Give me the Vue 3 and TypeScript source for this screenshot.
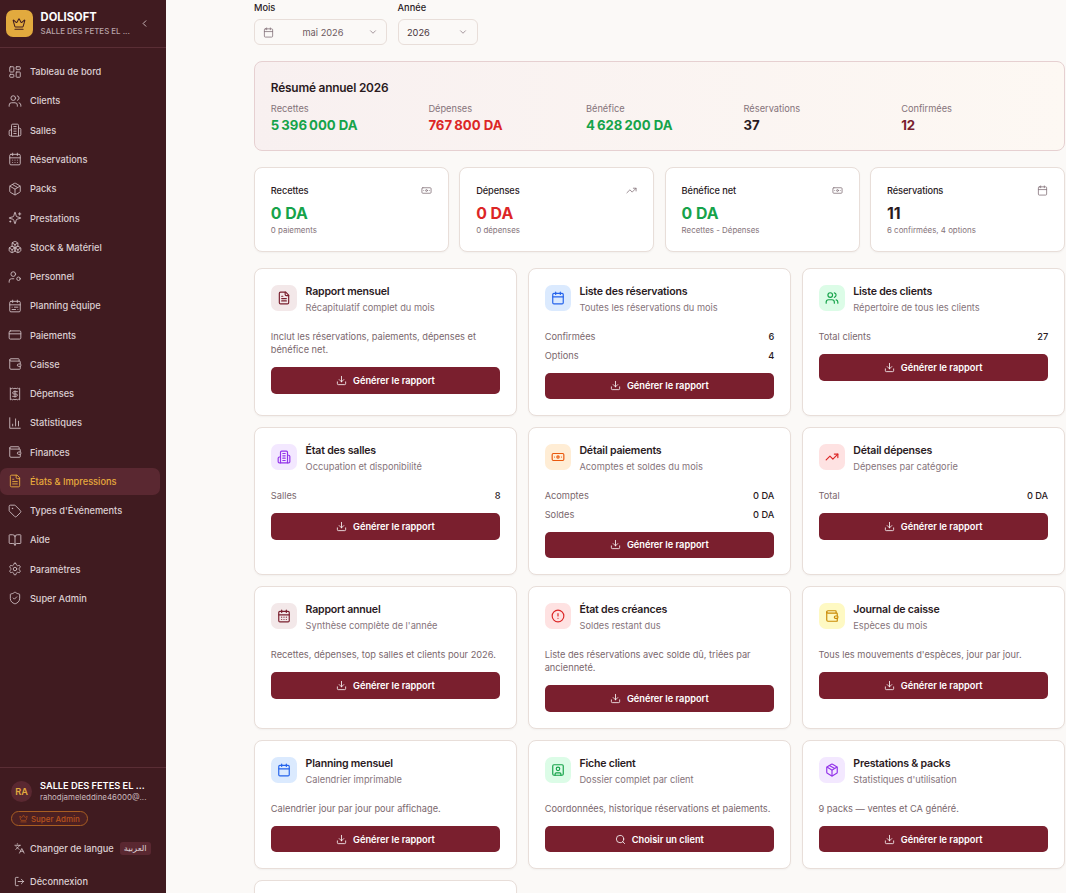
<script setup lang="ts">
// icônes au trait, 24x24
const icons: Record<string, string> = {
  dashboard: '<rect width="7" height="9" x="3" y="3" rx="1"/><rect width="7" height="5" x="14" y="3" rx="1"/><rect width="7" height="9" x="14" y="12" rx="1"/><rect width="7" height="5" x="3" y="16" rx="1"/>',
  users: '<path d="M16 21v-2a4 4 0 0 0-4-4H6a4 4 0 0 0-4 4v2"/><circle cx="9" cy="7" r="4"/><path d="M22 21v-2a4 4 0 0 0-3-3.87"/><path d="M16 3.13a4 4 0 0 1 0 7.75"/>',
  building: '<path d="M6 22V4a2 2 0 0 1 2-2h8a2 2 0 0 1 2 2v18Z"/><path d="M6 12H4a2 2 0 0 0-2 2v6a2 2 0 0 0 2 2h2"/><path d="M18 9h2a2 2 0 0 1 2 2v9a2 2 0 0 1-2 2h-2"/><path d="M10 6h4"/><path d="M10 10h4"/><path d="M10 14h4"/><path d="M10 18h4"/>',
  calendarDays: '<path d="M8 2v4"/><path d="M16 2v4"/><rect width="18" height="18" x="3" y="4" rx="2"/><path d="M3 10h18"/><path d="M8 14h.01"/><path d="M12 14h.01"/><path d="M16 14h.01"/><path d="M8 18h.01"/><path d="M12 18h.01"/><path d="M16 18h.01"/>',
  calendarRange: '<rect width="18" height="18" x="3" y="4" rx="2"/><path d="M16 2v4"/><path d="M3 10h18"/><path d="M8 2v4"/><path d="M17 14h-6"/><path d="M13 18H7"/><path d="M7 14h.01"/><path d="M17 18h.01"/>',
  calendar: '<path d="M8 2v4"/><path d="M16 2v4"/><rect width="18" height="18" x="3" y="4" rx="2"/><path d="M3 10h18"/>',
  package: '<path d="M11 21.73a2 2 0 0 0 2 0l7-4A2 2 0 0 0 21 16V8a2 2 0 0 0-1-1.73l-7-4a2 2 0 0 0-2 0l-7 4A2 2 0 0 0 3 8v8a2 2 0 0 0 1 1.73z"/><path d="M12 22V12"/><path d="m3.3 7 7.703 4.734a2 2 0 0 0 1.994 0L20.7 7"/><path d="m7.5 4.27 9 5.15"/>',
  sparkles: '<path d="M9.937 15.5A2 2 0 0 0 8.5 14.063l-6.135-1.582a.5.5 0 0 1 0-.962L8.5 9.936A2 2 0 0 0 9.937 8.5l1.582-6.135a.5.5 0 0 1 .963 0L14.063 8.5A2 2 0 0 0 15.5 9.937l6.135 1.581a.5.5 0 0 1 0 .964L15.5 14.063a2 2 0 0 0-1.437 1.437l-1.582 6.135a.5.5 0 0 1-.963 0z"/><path d="M20 3v4"/><path d="M22 5h-4"/><path d="M4 17v2"/><path d="M5 18H3"/>',
  boxes: '<path d="M2.97 12.92A2 2 0 0 0 2 14.63v3.24a2 2 0 0 0 .97 1.71l3 1.8a2 2 0 0 0 2.06 0L12 19v-5.5l-5-3-4.03 2.42Z"/><path d="m7 16.5-4.74-2.85"/><path d="m7 16.5 5-3"/><path d="M7 16.5v5.17"/><path d="M12 13.5V19l3.97 2.38a2 2 0 0 0 2.06 0l3-1.8a2 2 0 0 0 .97-1.71v-3.24a2 2 0 0 0-.97-1.71L17 10.5l-5 3Z"/><path d="m17 16.5-5-3"/><path d="m17 16.5 4.74-2.85"/><path d="M17 16.5v5.17"/><path d="M7.97 4.42A2 2 0 0 0 7 6.13v4.37l5 3 5-3V6.13a2 2 0 0 0-.97-1.71l-3-1.8a2 2 0 0 0-2.06 0l-3 1.8Z"/><path d="M12 8 7.26 5.15"/><path d="m12 8 4.74-2.85"/><path d="M12 13.5V8"/>',
  userCog: '<circle cx="18" cy="15" r="3"/><circle cx="9" cy="7" r="4"/><path d="M10 15H6a4 4 0 0 0-4 4v2"/>',
  card: '<rect width="20" height="14" x="2" y="5" rx="2"/><line x1="2" x2="22" y1="10" y2="10"/>',
  wallet: '<path d="M19 7V4a1 1 0 0 0-1-1H5a2 2 0 0 0 0 4h15a1 1 0 0 1 1 1v4h-3a2 2 0 0 0 0 4h3a1 1 0 0 0 1-1v-2a1 1 0 0 0-1-1"/><path d="M3 5v14a2 2 0 0 0 2 2h15a1 1 0 0 0 1-1v-4"/>',
  receipt: '<path d="M4 2v20l2-1 2 1 2-1 2 1 2-1 2 1 2-1 2 1V2l-2 1-2-1-2 1-2-1-2 1-2-1-2 1Z"/><path d="M16 8h-6a2 2 0 1 0 0 4h4a2 2 0 1 1 0 4H8"/><path d="M12 17.5v-11"/>',
  chart: '<path d="M3 3v18h18"/><path d="M18 17V9"/><path d="M13 17V5"/><path d="M8 17v-3"/>',
  file: '<path d="M15 2H6a2 2 0 0 0-2 2v16a2 2 0 0 0 2 2h12a2 2 0 0 0 2-2V7Z"/><path d="M14 2v4a2 2 0 0 0 2 2h4"/><path d="M10 9H8"/><path d="M16 13H8"/><path d="M16 17H8"/>',
  tag: '<path d="M12.586 2.586A2 2 0 0 0 11.172 2H4a2 2 0 0 0-2 2v7.172a2 2 0 0 0 .586 1.414l8.704 8.704a2.426 2.426 0 0 0 3.42 0l6.58-6.58a2.426 2.426 0 0 0 0-3.42z"/><circle cx="7.5" cy="7.5" r=".5" fill="currentColor"/>',
  book: '<path d="M12 7v14"/><path d="M3 18a1 1 0 0 1-1-1V4a1 1 0 0 1 1-1h5a4 4 0 0 1 4 4 4 4 0 0 1 4-4h5a1 1 0 0 1 1 1v13a1 1 0 0 1-1 1h-6a3 3 0 0 0-3 3 3 3 0 0 0-3-3z"/>',
  settings: '<path d="M12.22 2h-.44a2 2 0 0 0-2 2v.18a2 2 0 0 1-1 1.73l-.43.25a2 2 0 0 1-2 0l-.15-.08a2 2 0 0 0-2.73.73l-.22.38a2 2 0 0 0 .73 2.73l.15.1a2 2 0 0 1 1 1.72v.51a2 2 0 0 1-1 1.74l-.15.09a2 2 0 0 0-.73 2.73l.22.38a2 2 0 0 0 2.73.73l.15-.08a2 2 0 0 1 2 0l.43.25a2 2 0 0 1 1 1.73V20a2 2 0 0 0 2 2h.44a2 2 0 0 0 2-2v-.18a2 2 0 0 1 1-1.73l.43-.25a2 2 0 0 1 2 0l.15.08a2 2 0 0 0 2.73-.73l.22-.39a2 2 0 0 0-.73-2.73l-.15-.08a2 2 0 0 1-1-1.74v-.5a2 2 0 0 1 1-1.74l.15-.09a2 2 0 0 0 .73-2.73l-.22-.38a2 2 0 0 0-2.73-.73l-.15.08a2 2 0 0 1-2 0l-.43-.25a2 2 0 0 1-1-1.73V4a2 2 0 0 0-2-2z"/><circle cx="12" cy="12" r="3"/>',
  shield: '<path d="M20 13c0 5-3.5 7.5-7.66 8.95a1 1 0 0 1-.67-.01C7.5 20.5 4 18 4 13V6a1 1 0 0 1 1-1c2 0 4.5-1.2 6.24-2.72a1.17 1.17 0 0 1 1.52 0C14.51 3.81 17 5 19 5a1 1 0 0 1 1 1z"/><path d="m9 12 2 2 4-4"/>',
  crown: '<path d="M11.562 3.266a.5.5 0 0 1 .876 0L15.39 8.87a1 1 0 0 0 1.516.294L21.183 5.5a.5.5 0 0 1 .798.519l-2.834 10.246a1 1 0 0 1-.956.734H5.81a1 1 0 0 1-.957-.734L2.02 6.02a.5.5 0 0 1 .798-.519l4.276 3.664a1 1 0 0 0 1.516-.294z"/><path d="M5 21h14"/>',
  chevronLeft: '<path d="m15 18-6-6 6-6"/>',
  chevronDown: '<path d="m6 9 6 6 6-6"/>',
  languages: '<path d="m5 8 6 6"/><path d="m4 14 6-6 2-3"/><path d="M2 5h12"/><path d="M7 2h1"/><path d="m22 22-5-10-5 10"/><path d="M14 18h6"/>',
  logout: '<path d="M9 21H5a2 2 0 0 1-2-2V5a2 2 0 0 1 2-2h4"/><path d="m16 17 5-5-5-5"/><path d="M21 12H9"/>',
  banknote: '<rect width="20" height="12" x="2" y="6" rx="2"/><circle cx="12" cy="12" r="2"/><path d="M6 12h.01M18 12h.01"/>',
  trending: '<polyline points="22 7 13.5 15.5 8.5 10.5 2 17"/><polyline points="16 7 22 7 22 13"/>',
  download: '<path d="M21 15v4a2 2 0 0 1-2 2H5a2 2 0 0 1-2-2v-4"/><polyline points="7 10 12 15 17 10"/><line x1="12" x2="12" y1="15" y2="3"/>',
  search: '<circle cx="11" cy="11" r="8"/><path d="m21 21-4.3-4.3"/>',
  alert: '<circle cx="12" cy="12" r="10"/><line x1="12" x2="12" y1="8" y2="12"/><line x1="12" x2="12.01" y1="16" y2="16"/>',
  contact: '<rect width="18" height="18" x="3" y="3" rx="2"/><circle cx="12" cy="10" r="3"/><path d="M7 21v-2a2 2 0 0 1 2-2h6a2 2 0 0 1 2 2v2"/>',
}

const navItems = [
  { label: 'Tableau de bord', icon: 'dashboard' },
  { label: 'Clients', icon: 'users' },
  { label: 'Salles', icon: 'building' },
  { label: 'Réservations', icon: 'calendarDays' },
  { label: 'Packs', icon: 'package' },
  { label: 'Prestations', icon: 'sparkles' },
  { label: 'Stock & Matériel', icon: 'boxes' },
  { label: 'Personnel', icon: 'userCog' },
  { label: 'Planning équipe', icon: 'calendarRange' },
  { label: 'Paiements', icon: 'card' },
  { label: 'Caisse', icon: 'wallet' },
  { label: 'Dépenses', icon: 'receipt' },
  { label: 'Statistiques', icon: 'chart' },
  { label: 'Finances', icon: 'wallet' },
  { label: 'États & Impressions', icon: 'file', active: true },
  { label: "Types d'Événements", icon: 'tag' },
  { label: 'Aide', icon: 'book' },
  { label: 'Paramètres', icon: 'settings' },
  { label: 'Super Admin', icon: 'shield' },
]

const summary = [
  { label: 'Recettes', value: '5\u202f396\u202f000 DA', tone: 'green' },
  { label: 'Dépenses', value: '767\u202f800 DA', tone: 'red' },
  { label: 'Bénéfice', value: '4\u202f628\u202f200 DA', tone: 'green' },
  { label: 'Réservations', value: '37', tone: 'dark' },
  { label: 'Confirmées', value: '12', tone: 'wine' },
]

const stats = [
  { label: 'Recettes', value: '0 DA', sub: '0 paiements', icon: 'banknote', tone: 'green' },
  { label: 'Dépenses', value: '0 DA', sub: '0 dépenses', icon: 'trending', tone: 'red' },
  { label: 'Bénéfice net', value: '0 DA', sub: 'Recettes - Dépenses', icon: 'banknote', tone: 'green' },
  { label: 'Réservations', value: '11', sub: '6 confirmées, 4 options', icon: 'calendar', tone: 'dark' },
]

interface Report {
  title: string
  sub: string
  icon: string
  color: string
  desc?: string
  rows?: [string, string][]
  action?: string
}

const reports: Report[] = [
  { title: 'Rapport mensuel', sub: 'Récapitulatif complet du mois', icon: 'file', color: 'wine', desc: 'Inclut les réservations, paiements, dépenses et bénéfice net.' },
  { title: 'Liste des réservations', sub: 'Toutes les réservations du mois', icon: 'calendar', color: 'blue', rows: [['Confirmées', '6'], ['Options', '4']] },
  { title: 'Liste des clients', sub: 'Répertoire de tous les clients', icon: 'users', color: 'green', rows: [['Total clients', '27']] },
  { title: 'État des salles', sub: 'Occupation et disponibilité', icon: 'building', color: 'purple', rows: [['Salles', '8']] },
  { title: 'Détail paiements', sub: 'Acomptes et soldes du mois', icon: 'banknote', color: 'orange', rows: [['Acomptes', '0 DA'], ['Soldes', '0 DA']] },
  { title: 'Détail dépenses', sub: 'Dépenses par catégorie', icon: 'trending', color: 'red', rows: [['Total', '0 DA']] },
  { title: 'Rapport annuel', sub: "Synthèse complète de l'année", icon: 'calendarDays', color: 'wine', desc: 'Recettes, dépenses, top salles et clients pour 2026.' },
  { title: 'État des créances', sub: 'Soldes restant dus', icon: 'alert', color: 'red', desc: 'Liste des réservations avec solde dû, triées par ancienneté.' },
  { title: 'Journal de caisse', sub: 'Espèces du mois', icon: 'wallet', color: 'yellow', desc: "Tous les mouvements d'espèces, jour par jour." },
  { title: 'Planning mensuel', sub: 'Calendrier imprimable', icon: 'calendar', color: 'blue', desc: 'Calendrier jour par jour pour affichage.' },
  { title: 'Fiche client', sub: 'Dossier complet par client', icon: 'contact', color: 'green', desc: 'Coordonnées, historique réservations et paiements.', action: 'Choisir un client' },
  { title: 'Prestations & packs', sub: "Statistiques d'utilisation", icon: 'package', color: 'purple', desc: '9 packs — ventes et CA généré.' },
]
</script>

<template>
  <div class="page">
    <aside class="sidebar">
      <header class="brand">
        <div class="logo"><svg class="ico" viewBox="0 0 24 24" v-html="icons.crown"></svg></div>
        <div class="brand-text">
          <div class="brand-name">DOLISOFT</div>
          <div class="brand-sub">SALLE DES FETES EL ...</div>
        </div>
        <svg class="ico collapse" viewBox="0 0 24 24" v-html="icons.chevronLeft"></svg>
      </header>

      <nav class="nav">
        <a v-for="item in navItems" :key="item.label" class="nav-item" :class="{ active: item.active }">
          <svg class="ico" viewBox="0 0 24 24" v-html="icons[item.icon]"></svg>
          <span>{{ item.label }}</span>
        </a>
      </nav>

      <footer class="side-foot">
        <div class="account">
          <div class="avatar">RA</div>
          <div class="account-text">
            <div class="account-name">SALLE DES FETES EL ...</div>
            <div class="account-mail">rahodjameleddine46000@...</div>
          </div>
        </div>
        <div class="role"><svg class="ico" viewBox="0 0 24 24" v-html="icons.crown"></svg>Super Admin</div>
        <a class="foot-link lang">
          <svg class="ico" viewBox="0 0 24 24" v-html="icons.languages"></svg>
          <span class="foot-label">Changer de langue</span>
          <span class="lang-tag">العربية</span>
        </a>
        <a class="foot-link logout">
          <svg class="ico" viewBox="0 0 24 24" v-html="icons.logout"></svg>
          <span class="foot-label">Déconnexion</span>
        </a>
      </footer>
    </aside>

    <main class="main">
      <div class="filters">
        <div class="field">
          <label>Mois</label>
          <div class="select month">
            <svg class="ico" viewBox="0 0 24 24" v-html="icons.calendar"></svg>
            <span class="select-value">mai 2026</span>
            <svg class="ico chev" viewBox="0 0 24 24" v-html="icons.chevronDown"></svg>
          </div>
        </div>
        <div class="field">
          <label>Année</label>
          <div class="select year">
            <span class="select-value">2026</span>
            <svg class="ico chev" viewBox="0 0 24 24" v-html="icons.chevronDown"></svg>
          </div>
        </div>
      </div>

      <section class="summary">
        <h2>Résumé annuel 2026</h2>
        <div class="summary-grid">
          <div v-for="s in summary" :key="s.label">
            <div class="summary-label">{{ s.label }}</div>
            <div class="summary-value" :class="s.tone">{{ s.value }}</div>
          </div>
        </div>
      </section>

      <section class="stats">
        <div v-for="s in stats" :key="s.label" class="stat">
          <div class="stat-head">
            <span>{{ s.label }}</span>
            <svg class="ico" viewBox="0 0 24 24" v-html="icons[s.icon]"></svg>
          </div>
          <div class="stat-value" :class="s.tone">{{ s.value }}</div>
          <div class="stat-sub">{{ s.sub }}</div>
        </div>
      </section>

      <section class="reports">
        <article v-for="r in reports" :key="r.title" class="report">
          <div class="report-head">
            <div class="report-icon" :class="r.color">
              <svg class="ico" viewBox="0 0 24 24" v-html="icons[r.icon]"></svg>
            </div>
            <div>
              <h3>{{ r.title }}</h3>
              <p>{{ r.sub }}</p>
            </div>
          </div>
          <p v-if="r.desc" class="report-desc">{{ r.desc }}</p>
          <div v-else class="report-rows">
            <div v-for="row in r.rows" :key="row[0]" class="report-row">
              <span>{{ row[0] }}</span>
              <b>{{ row[1] }}</b>
            </div>
          </div>
          <button class="report-btn" type="button">
            <svg class="ico" viewBox="0 0 24 24" v-html="icons[r.action ? 'search' : 'download']"></svg>
            {{ r.action || 'Générer le rapport' }}
          </button>
        </article>
        <article class="report stub"></article>
      </section>
    </main>
  </div>
</template>

<style>
html,
body {
  margin: 0;
  height: 100%;
  overflow: hidden;
  background: #fbf9f7;
}
</style>

<style scoped>
.page {
  display: flex;
  height: 893px;
  overflow: hidden;
  font-family: Inter, "DejaVu Sans", sans-serif;
  color: #2a1a1e;
  background: #fbf9f7;
}

.ico {
  width: 14px;
  height: 14px;
  flex: none;
  fill: none;
  stroke: currentColor;
  stroke-width: 1.75;
  stroke-linecap: round;
  stroke-linejoin: round;
}

/* barre latérale */
.sidebar {
  width: 166px;
  flex: none;
  height: 893px;
  display: flex;
  flex-direction: column;
  background: #401b20;
  color: #e6dadc;
}

.brand {
  height: 48px;
  box-sizing: border-box;
  flex: none;
  display: flex;
  align-items: center;
  gap: 8px;
  padding: 0 16px 0 6px;
  border-bottom: 1px solid #5a2e35;
  margin-bottom: 10.4px;
}

.logo {
  width: 26.6px;
  height: 26.6px;
  flex: none;
  display: flex;
  align-items: center;
  justify-content: center;
  border-radius: 7px;
  background: #e2aa3e;
  color: #401b20;
}

.brand-text {
  flex: 1;
  min-width: 0;
}

.brand-name {
  font-size: 11.2px;
  line-height: 14px;
  font-weight: 700;
  color: #fff;
}

.brand-sub {
  margin-top: 2px;
  font-size: 7.92px;
  line-height: 11px;
  font-weight: 500;
  color: #b8a3a8;
  white-space: nowrap;
}

.collapse {
  width: 11px;
  height: 11px;
  color: #e6dadc;
}

.nav {
  flex: 1;
  display: flex;
  flex-direction: column;
  gap: 2.68px;
}

.nav-item {
  height: 26.6px;
  width: 160px;
  box-sizing: border-box;
  display: flex;
  align-items: center;
  gap: 8.4px;
  padding-left: 7.5px;
  border-radius: 7px;
  font-size: 9.24px;
  font-weight: 500;
  color: #dccfd2;
}

.nav-item .ico {
  stroke-width: 1.6;
  color: #c9b8bc;
}

.nav-item.active {
  background: #5a2831;
  color: #e6a93c;
}

.nav-item.active .ico {
  color: #e6a93c;
}

.side-foot {
  flex: none;
  height: 126px;
  box-sizing: border-box;
  border-top: 1px solid #5a2e35;
  padding: 12px 6px 0 11px;
}

.account {
  display: flex;
  align-items: center;
  gap: 8px;
}

.avatar {
  width: 21px;
  height: 21px;
  flex: none;
  border-radius: 50%;
  display: flex;
  align-items: center;
  justify-content: center;
  background: #5a2831;
  color: #e2aa3e;
  font-size: 9.24px;
  font-weight: 600;
}

.account-text {
  min-width: 0;
}

.account-name {
  font-size: 9.24px;
  line-height: 12px;
  font-weight: 600;
  color: #fff;
  white-space: nowrap;
}

.account-mail {
  font-size: 7.92px;
  line-height: 11px;
  color: #c9b8bc;
  white-space: nowrap;
}

.role {
  display: inline-flex;
  align-items: center;
  gap: 3px;
  margin-top: 8px;
  height: 15px;
  padding: 0 7px;
  box-sizing: border-box;
  border: 1px solid #a85e22;
  border-radius: 8px;
  background: #4c2022;
  font-size: 7.92px;
  font-weight: 500;
  color: #b8541c;
}

.role .ico {
  width: 9px;
  height: 9px;
}

.foot-link {
  display: flex;
  align-items: center;
  gap: 5px;
  padding-left: 3px;
  font-size: 9.24px;
  font-weight: 500;
  color: #dccfd2;
}

.foot-link .ico {
  width: 11px;
  height: 11px;
}

.foot-label {
  white-space: nowrap;
}

.lang {
  height: 14px;
  margin-top: 14px;
}

.lang-tag {
  margin-left: 1px;
  padding: 0 4px;
  height: 13px;
  line-height: 13px;
  border-radius: 3px;
  background: #5a2831;
  font-size: 8.4px;
}

.logout {
  height: 14px;
  margin-top: 19px;
}

/* contenu */
.main {
  flex: 1;
  min-width: 0;
  padding: 0 1px 0 88px;
}

.filters {
  display: flex;
  gap: 10.56px;
}

.field label {
  display: block;
  height: 14px;
  margin-bottom: 5px;
  font-size: 9.24px;
  line-height: 15px;
  font-weight: 500;
}

.select {
  height: 26px;
  box-sizing: border-box;
  display: flex;
  align-items: center;
  padding: 0 8.4px;
  border: 1px solid #e8ded9;
  border-radius: 6px;
  font-size: 9.24px;
  color: #6e5a60;
}

.select .ico {
  width: 11px;
  height: 11px;
  color: #85737a;
}

.select .chev {
  width: 10px;
  height: 10px;
}

.month {
  width: 133px;
}

.month .select-value {
  flex: 1;
  padding-left: 4px;
  text-align: center;
}

.year {
  width: 80px;
  justify-content: space-between;
  color: #4a363c;
}

.summary {
  box-sizing: border-box;
  height: 90px;
  margin-top: 16px;
  padding: 17px 15.84px;
  border: 1px solid #e6d0d1;
  border-radius: 8px;
  background: linear-gradient(90deg, #f8f0f0, #fdf8f3);
}

.summary h2 {
  margin: 0 0 6px;
  font-size: 11.88px;
  line-height: 17px;
  font-weight: 600;
  letter-spacing: -.2px;
}

.summary-grid {
  display: grid;
  grid-template-columns: repeat(5, 1fr);
  gap: 10.56px;
}

.summary-label {
  font-size: 9.24px;
  line-height: 14px;
  color: #85737a;
}

.summary-value {
  margin-top: 1px;
  font-size: 13.2px;
  line-height: 17px;
  font-weight: 700;
}

.green {
  color: #16a34a;
}

.red {
  color: #dc2626;
}

.dark {
  color: #2a1a1e;
}

.wine {
  color: #7a1f2e;
}

.stats {
  display: grid;
  grid-template-columns: repeat(4, 1fr);
  gap: 10.56px;
  margin-top: 16px;
}

.stat {
  height: 85px;
  box-sizing: border-box;
  padding: 16.8px 15.84px;
  background: #fff;
  border: 1px solid #e8ded9;
  border-radius: 8px;
  box-shadow: 0 1px 2px rgba(0, 0, 0, .04);
}

.stat-head {
  display: flex;
  align-items: center;
  justify-content: space-between;
  height: 12px;
  font-size: 9.24px;
  font-weight: 500;
  letter-spacing: -.1px;
}

.stat-head .ico {
  width: 11px;
  height: 11px;
  color: #85737a;
}

.stat-value {
  margin-top: 6px;
  font-size: 15.84px;
  line-height: 21px;
  font-weight: 700;
}

.stat-sub {
  font-size: 7.92px;
  line-height: 12px;
  color: #85737a;
}

.reports {
  display: grid;
  grid-template-columns: repeat(3, 1fr);
  gap: 11.2px 10.56px;
  margin-top: 16px;
}

.report {
  box-sizing: border-box;
  padding: 15.84px;
  background: #fff;
  border: 1px solid #e8ded9;
  border-radius: 8px;
  box-shadow: 0 1px 2px rgba(0, 0, 0, .04);
}

.report.stub {
  height: 60px;
}

.report-head {
  display: flex;
  gap: 8.4px;
  height: 30px;
  margin-bottom: 15.2px;
}

.report-icon {
  width: 26.4px;
  height: 26.4px;
  flex: none;
  display: flex;
  align-items: center;
  justify-content: center;
  border-radius: 7px;
}

.report-icon .ico {
  stroke-width: 2;
}

.report-icon.wine {
  background: #f3e8e9;
  color: #7a1f2e;
}

.report-icon.blue {
  background: #dbeafe;
  color: #2563eb;
}

.report-icon.green {
  background: #dcfce7;
  color: #16a34a;
}

.report-icon.purple {
  background: #f3e8ff;
  color: #9333ea;
}

.report-icon.orange {
  background: #ffedd5;
  color: #ea580c;
}

.report-icon.red {
  background: #fee2e2;
  color: #dc2626;
}

.report-icon.yellow {
  background: #fef9c3;
  color: #ca8a04;
}

.report-head h3 {
  margin: 0 0 2px;
  font-size: 10.56px;
  line-height: 14px;
  font-weight: 600;
  letter-spacing: -.2px;
}

.report-head p {
  margin: 0;
  font-size: 9.24px;
  line-height: 14px;
  color: #85737a;
}

.report-desc {
  margin: 0;
  font-size: 9.24px;
  line-height: 13.2px;
  color: #7a676d;
}

.report-rows {
  display: flex;
  flex-direction: column;
  gap: 5.3px;
}

.report-row {
  display: flex;
  justify-content: space-between;
  font-size: 9.24px;
  line-height: 13.2px;
  color: #7a676d;
}

.report-row b {
  font-weight: 500;
  color: #2a1a1e;
}

.report-btn {
  display: flex;
  align-items: center;
  justify-content: center;
  gap: 5.6px;
  width: 100%;
  height: 26.4px;
  margin-top: 10.9px;
  padding: 0;
  border: 0;
  border-radius: 5px;
  background: #7a1f2e;
  font-family: inherit;
  font-size: 9.24px;
  font-weight: 600;
  color: #fff;
}

.report-btn .ico {
  width: 11px;
  height: 11px;
}
</style>
